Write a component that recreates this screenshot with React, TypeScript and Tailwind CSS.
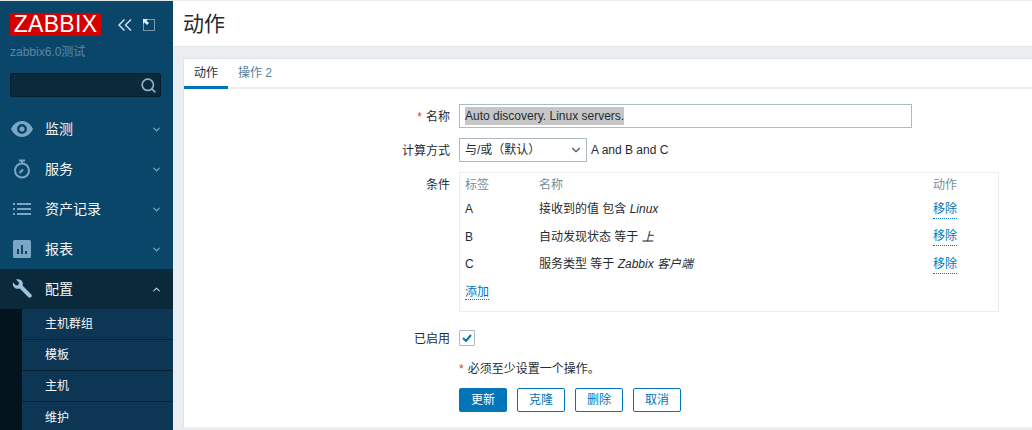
import { ChevronDown, ChevronUp, Search } from 'lucide-react';
import type { ReactNode } from 'react';

const font = 'font-["Liberation_Sans","Noto_Sans_CJK_SC",sans-serif]';

const EyeIcon = () => (
  <svg width="22" height="16" viewBox="0 0 22 16" fill="#7ba7c4">
    <path fillRule="evenodd" d="M11 0C5.500 0 2 4 0 8c2 4 5.500 8 11 8s9-4 11-8c-2-4-5.500-8-11-8zm0 3a5 5 0 1 1 0 10 5 5 0 0 1 0-10zm0 2.500a2.500 2.500 0 1 0 0 5 2.500 2.500 0 0 0 0-5z" />
  </svg>
);

const TimerIcon = () => (
  <svg width="18" height="20" viewBox="0 0 18 20" fill="none" stroke="#7ba7c4" strokeWidth="2">
    <circle cx="9" cy="11.500" r="7" />
    <path d="M6 1.500h6M9 1.500v3" />
    <path d="M6.500 14l3.500-3.500" strokeWidth="2.200" />
  </svg>
);

const ListIcon = () => (
  <svg width="18" height="12" viewBox="0 0 18 12" fill="#7ba7c4">
    <rect x="0" y="0" width="2" height="2" />
    <rect x="4" y="0" width="14" height="2" />
    <rect x="0" y="5" width="2" height="2" />
    <rect x="4" y="5" width="14" height="2" />
    <rect x="0" y="10" width="2" height="2" />
    <rect x="4" y="10" width="14" height="2" />
  </svg>
);

const ReportIcon = () => (
  <svg width="18" height="18" viewBox="0 0 18 18">
    <rect width="18" height="18" rx="1.500" fill="#7ba7c4" />
    <rect x="4" y="9" width="2" height="5" fill="#0a466a" />
    <rect x="8" y="5" width="2" height="9" fill="#0a466a" />
    <rect x="12" y="11" width="2" height="3" fill="#0a466a" />
  </svg>
);

const WrenchIcon = () => (
  <svg width="20" height="20" viewBox="0 0 20 20" fill="#9cc3dc">
    <path d="M1 3.500 4 6.500 6.500 6 7 3.500 4 .6C6.500-.4 9.500.4 10.500 3c.5 1.300.4 2.600 0 3.600l8.600 8.600c.9.900.9 2.100.1 2.900-.9.900-2.100.8-3-.1L7.700 9.500C6.500 10 5 10 3.700 9.400 1.300 8.300.3 6 1 3.500z" />
  </svg>
);

const DoubleLeftIcon = () => (
  <svg width="14" height="12" viewBox="0 0 14 12" fill="none" stroke="#c9dfec" strokeWidth="1.500">
    <path d="M6.500 .5 1 6l5.500 5.500M13 .5 7.500 6l5.500 5.500" />
  </svg>
);

const CollapseIcon = () => (
  <svg width="12" height="12" viewBox="0 0 12 12" fill="none">
    <rect x="0.500" y="0.500" width="11" height="11" stroke="#e3eef5" strokeDasharray="1 1" />
    <path d="M0 0h5L3.500 1.500 6 4 4 6 1.500 3.500 0 5z" fill="#e3eef5" />
  </svg>
);

function MenuItem({ icon, label, open }: { icon: ReactNode; label: string; open?: boolean }) {
  return (
    <div className={`flex h-10 items-center pr-[11px] ${open ? 'bg-[#0a2a3c]' : ''}`}>
      <div className="flex w-[44px] shrink-0 items-center justify-center">{icon}</div>
      <span className="ml-[1px] flex-1 text-[14px] text-[#f2f6f9]">{label}</span>
      {open ? (
        <ChevronUp size={11} strokeWidth={2.500} className="text-[#b9cfdd]" />
      ) : (
        <ChevronDown size={11} strokeWidth={2.500} className="text-[#86a8bf]" />
      )}
    </div>
  );
}

function SubItem({ label, last }: { label: string; last?: boolean }) {
  return (
    <div className={`flex h-[31px] items-center pl-[23px] text-[12px] text-[#f2f6f9] ${last ? '' : 'border-b border-[#06202f]'}`}>
      {label}
    </div>
  );
}

function Row({ label, star, className, children }: { label?: string; star?: boolean; className?: string; children: ReactNode }) {
  return (
    <div className={`flex ${className ?? ''}`}>
      <div className="-mb-[1px] w-[266px] shrink-0 pt-[1px] text-right text-[12px] leading-[24px] text-[#1f2c33]">
        {star && <span className="mr-[4px] text-[#e33734]">*</span>}
        {label}
      </div>
      <div className="ml-[9px] flex-1">{children}</div>
    </div>
  );
}

function Link({ children }: { children: ReactNode }) {
  return <span className="border-b border-dotted border-[#0275b8] text-[#0275b8]">{children}</span>;
}

const conditions = [
  { tag: 'A', text: '接收到的值 包含 ', value: 'Linux' },
  { tag: 'B', text: '自动发现状态 等于 ', value: '上' },
  { tag: 'C', text: '服务类型 等于 ', value: 'Zabbix 客户端' },
];

export default function App() {
  return (
    <div className={`flex h-[430px] w-[1032px] overflow-hidden bg-[#ebeef0] ${font}`}>
      <aside className="flex h-full w-[173px] shrink-0 flex-col overflow-hidden border-t border-[#e4e7e9] bg-[#0a466a]">
        <div className="flex shrink-0 items-center pl-[10px] pt-[12px]">
          <div className="flex h-[23px] w-[91px] items-center justify-center bg-[#d40000] text-[23px] leading-none tracking-[0.3px] text-white">
            ZABBIX
          </div>
          <div className="ml-[17px]">
            <DoubleLeftIcon />
          </div>
          <div className="ml-[11px]">
            <CollapseIcon />
          </div>
        </div>
        <div className="shrink-0 pl-[10px] pt-[6px] text-[12px] leading-[20px] text-[#5d87a4]">zabbix6.0测试</div>
        <div className="ml-[10px] mr-[12px] mt-[11px] flex h-[24px] shrink-0 items-center justify-end rounded-[2px] border border-[#04202f] bg-[#0a2a3c] pr-[3px]">
          <Search size={17} strokeWidth={2.400} className="text-[#8fb0c4]" />
        </div>
        <nav className="mt-[12px] shrink-0">
          <MenuItem icon={<EyeIcon />} label="监测" />
          <MenuItem icon={<TimerIcon />} label="服务" />
          <MenuItem icon={<ListIcon />} label="资产记录" />
          <MenuItem icon={<ReportIcon />} label="报表" />
          <MenuItem icon={<WrenchIcon />} label="配置" open />
          <div className="flex bg-[#04141e]">
            <div className="w-[22px] shrink-0" />
            <div className="flex-1 bg-[#0d3654]">
              <SubItem label="主机群组" />
              <SubItem label="模板" />
              <SubItem label="主机" />
              <SubItem label="维护" last />
            </div>
          </div>
        </nav>
      </aside>

      <main className="flex min-w-0 flex-1 flex-col">
        <header className="mt-[1px] flex h-[46px] shrink-0 items-center border-b border-[#dfe4e7] bg-white pl-[10px] text-[21px] text-[#1f2c33]">
          动作
        </header>
        <section className="ml-[10px] mt-[11px] h-[369px] border-l border-t border-[#dfe4e7] bg-white">
          <div className="flex h-[30px] border-b-2 border-[#ebeef0] text-[12px]">
            <div className="-mb-[2px] flex w-[44px] items-center justify-center border-b-[3px] border-[#0275b8] text-[#1f2c33]">动作</div>
            <div className="ml-[10px] flex items-center pb-[1px] text-[#4f7f9f]">操作 2</div>
          </div>

          <div className="pt-[15px]">
            <Row label="名称" star>
              <div className="flex h-[24px] w-[453px] items-center border border-[#acbbc2] px-[5px] text-[12px] text-[#1f2c33]">
                <span className="bg-[#c6c6c6]">Auto discovery. Linux servers.</span>
              </div>
            </Row>
            <Row label="计算方式" className="mt-[10px]">
              <div className="flex items-center">
                <div className="flex h-[24px] w-[128px] items-center justify-between border border-[#acbbc2] pl-[5px] pr-[3px] text-[12px] text-[#1f2c33]">
                  与/或（默认）
                  <ChevronDown size={14} strokeWidth={2} className="text-[#4a5a63]" />
                </div>
                <span className="ml-[4px] text-[12px] text-[#1f2c33]">A and B and C</span>
              </div>
            </Row>
            <Row label="条件" className="mt-[10px]">
              <div className="h-[140px] w-[540px] border border-[#ebeef0] pl-[5px] pt-[4px] text-[12px] text-[#1f2c33]">
                <div className="mb-[2.500px] flex h-[16px] items-center text-[#768d99]">
                  <div className="w-[74px]">标签</div>
                  <div className="w-[394px]">名称</div>
                  <div>动作</div>
                </div>
                {conditions.map((c) => (
                  <div key={c.tag} className="flex h-[27.500px] items-center">
                    <div className="w-[74px]">{c.tag}</div>
                    <div className="w-[394px]">
                      {c.text}
                      <em>{c.value}</em>
                    </div>
                    <Link>移除</Link>
                  </div>
                ))}
                <div className="mt-[5px]">
                  <Link>添加</Link>
                </div>
              </div>
            </Row>
            <Row label="已启用" className="mt-[14px]">
              <div className="flex h-[24px] items-center">
                <div className="flex h-[16px] w-[16px] items-center justify-center rounded-[1px] border border-[#acbbc2]">
                  <svg width="10" height="8" viewBox="0 0 10 8" fill="none" stroke="#0275b8" strokeWidth="2">
                    <path d="M1 4l3 3 5-6" />
                  </svg>
                </div>
              </div>
            </Row>
            <Row className="mt-[7px]">
              <div className="text-[12px] leading-[24px] text-[#1f2c33]">
                <span className="mr-[4px] text-[#e33734]">*</span>必须至少设置一个操作。
              </div>
            </Row>
            <Row className="mt-[7px]">
              <div className="flex gap-[10px] text-[12px]">
                <button className="h-[24px] w-[48px] rounded-[2px] bg-[#0275b8] text-white">更新</button>
                <button className="h-[24px] w-[48px] rounded-[2px] border border-[#0275b8] text-[#0275b8]">克隆</button>
                <button className="h-[24px] w-[48px] rounded-[2px] border border-[#0275b8] text-[#0275b8]">删除</button>
                <button className="h-[24px] w-[48px] rounded-[2px] border border-[#0275b8] text-[#0275b8]">取消</button>
              </div>
            </Row>
          </div>
        </section>
      </main>
    </div>
  );
}
